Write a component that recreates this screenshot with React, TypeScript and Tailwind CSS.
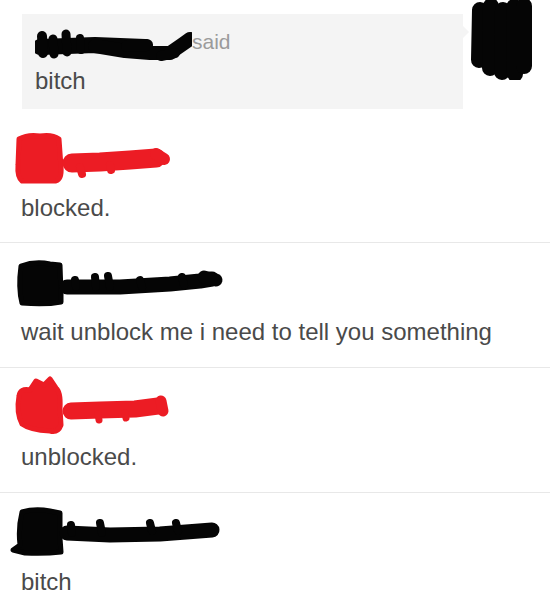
import React from 'react';

type Stroke = { d: string; w: number };

interface RedactProps {
  color: string;
  avatar: string;
  strokes: Stroke[];
}

// marker scribble over the avatar + username
const Redact: React.FC<RedactProps> = ({ color, avatar, strokes }) => (
  <svg width="240" height="74" viewBox="0 0 240 74" className="block">
    <path d={avatar} fill={color} stroke={color} strokeWidth={5} strokeLinejoin="round" />
    {strokes.map((s, i) => (
      <path
        key={i}
        d={s.d}
        fill="none"
        stroke={color}
        strokeWidth={s.w}
        strokeLinecap="round"
        strokeLinejoin="round"
      />
    ))}
  </svg>
);

const RED = '#ec1c24';
const BLACK = '#050505';

const rows: { text: string; color: string; avatar: string; strokes: Stroke[] }[] = [
  {
    text: 'blocked.',
    color: RED,
    avatar: 'M19 20 Q28 15 40 17 Q52 15 59 20 L61 48 Q62 60 56 62 L22 62 Q17 58 18 46 Z',
    strokes: [
      { d: 'M72 44 L100 43 L130 41 L156 39', w: 19 },
      { d: 'M80 48 L82 55', w: 8 },
      { d: 'M110 46 L111 51', w: 8 },
      { d: 'M156 35 L164 40', w: 12 },
    ],
  },
  {
    text: 'wait unblock me i need to tell you something',
    color: BLACK,
    avatar: 'M21 23 Q35 18 50 21 L60 22 L61 50 L61 59 Q45 62 22 60 Q18 45 21 23 Z',
    strokes: [
      { d: 'M67 44 L120 44 L170 41 L200 38 L212 36', w: 15 },
      { d: 'M75 37 L76 44', w: 8 },
      { d: 'M95 34 L96 44', w: 8 },
      { d: 'M108 33 L110 44', w: 8 },
      { d: 'M140 37 L142 44', w: 8 },
      { d: 'M182 34 L184 42', w: 8 },
      { d: 'M204 34 L216 37', w: 13 },
    ],
  },
  {
    text: 'unblocked.',
    color: RED,
    avatar:
      'M19 28 Q20 20 30 22 L36 13 L44 17 L50 11 L56 20 Q61 24 60 40 L61 57 Q58 65 50 63 Q30 62 22 56 Q16 45 19 28 Z',
    strokes: [
      { d: 'M71 43 L100 42 L135 41 L158 38', w: 17 },
      { d: 'M161 33 L163 43', w: 11 },
      { d: 'M98 46 L99 52', w: 7 },
      { d: 'M125 45 L126 50', w: 7 },
    ],
  },
  {
    text: 'bitch',
    color: BLACK,
    avatar: 'M22 19 Q35 15 50 18 L60 20 L60 45 L61 59 Q45 61 25 60 L13 57 L20 52 Q18 35 22 19 Z',
    strokes: [
      { d: 'M67 40 L110 42 L160 41 L212 37', w: 15 },
      { d: 'M71 32 L72 40', w: 8 },
      { d: 'M100 30 L102 40', w: 8 },
      { d: 'M150 30 L152 38', w: 8 },
      { d: 'M176 30 L178 38', w: 8 },
    ],
  },
];

export default function App() {
  return (
    <div className="w-[550px] h-[608px] overflow-hidden bg-white text-[#4a4a4a] font-['Liberation_Sans',Arial,sans-serif]">
      {/* quoted message */}
      <div className="flex items-start h-[119px]">
        <div className="relative ml-[22px] mt-[14px] w-[441px] h-[95px] bg-[#f4f4f4] pl-[13px] pt-[8px]">
          <div className="flex items-center h-[40px]">
            <svg width="157" height="40" viewBox="0 0 157 40" className="block shrink-0">
              <g fill="none" stroke={BLACK} strokeLinecap="round" strokeLinejoin="round">
                <path d="M5 25 L60 23 L110 25" strokeWidth={16} />
                <path d="M7 14 L8 31" strokeWidth={10} />
                <path d="M18 17 L19 32" strokeWidth={9} />
                <path d="M31 12 L32 30" strokeWidth={9} />
                <path d="M45 16 L46 28" strokeWidth={8} />
                <path d="M60 24 L90 29 L115 31 L135 31 L148 22 L155 17" strokeWidth={14} />
                <path d="M92 24 L112 23" strokeWidth={12} />
                <path d="M126 34 L140 31" strokeWidth={10} />
              </g>
            </svg>
            <span className="text-[21px] leading-[24px] text-[#9b9b9b]">said</span>
          </div>
          <p className="mt-[4px] text-[24px] leading-[30px]">bitch</p>
          <span className="absolute left-full top-[12px] border-y-[6px] border-y-transparent border-l-[6px] border-l-[#f4f4f4]" />
        </div>
        <svg width="70" height="80" viewBox="0 0 70 80" className="block ml-[3px] shrink-0">
          <g fill="none" stroke={BLACK} strokeLinecap="round" strokeWidth={16}>
            <path d="M14 10 L13 60" />
            <path d="M25 6 L24 68" />
            <path d="M37 10 L36 72" />
            <path d="M48 7 L49 74" />
            <path d="M58 6 L58 66" />
          </g>
        </svg>
      </div>

      {rows.map((r, i) => (
        <div
          key={i}
          className={i === 0 ? 'h-[123px]' : 'h-[125px] border-t border-[#e8e8e8]'}
        >
          <div className="h-[74px]">
            <Redact color={r.color} avatar={r.avatar} strokes={r.strokes} />
          </div>
          <p className="pl-[21px] text-[24px] leading-[30px] whitespace-nowrap">{r.text}</p>
        </div>
      ))}
    </div>
  );
}
